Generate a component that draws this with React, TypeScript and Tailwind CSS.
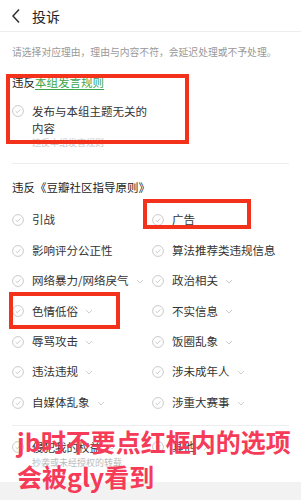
import React from "react";

const FONT = { fontFamily: '"Noto Sans CJK SC", "Noto Sans", sans-serif' };

function Check() {
  return (
    <svg width="12" height="12" viewBox="0 0 12 12" className="shrink-0">
      <circle cx="6" cy="6" r="5.4" fill="none" stroke="#c4c4c4" strokeWidth="0.9" />
      <path d="M3.6 6.1 L5.3 7.7 L8.5 4.4" fill="none" stroke="#c4c4c4" strokeWidth="0.9" />
    </svg>
  );
}

function Down() {
  return (
    <svg width="8" height="5" viewBox="0 0 8 5" className="shrink-0 ml-[7px] mt-[1px]">
      <path d="M1 1 L4 4 L7 1" fill="none" stroke="#c8c8c8" strokeWidth="0.9" />
    </svg>
  );
}

function Right() {
  return (
    <svg width="5" height="8" viewBox="0 0 5 8" className="shrink-0 ml-[8px]">
      <path d="M1 1 L4 4 L1 7" fill="none" stroke="#c8c8c8" strokeWidth="0.9" />
    </svg>
  );
}

function Item({ label, more }: { label: string; more?: boolean }) {
  return (
    <div className="flex items-center h-[30.4px]">
      <Check />
      <span className="ml-[8px] text-[11.5px] text-[#333] leading-none">{label}</span>
      {more && <Down />}
    </div>
  );
}

const left: [string, boolean][] = [
  ["引战", false],
  ["影响评分公正性", false],
  ["网络暴力/网络戾气", true],
  ["色情低俗", true],
  ["辱骂攻击", true],
  ["违法违规", true],
  ["自媒体乱象", true],
];
const right: [string, boolean][] = [
  ["广告", false],
  ["算法推荐类违规信息", false],
  ["政治相关", true],
  ["不实信息", true],
  ["饭圈乱象", true],
  ["涉未成年人", true],
  ["涉重大赛事", true],
];

export default function App() {
  return (
    <div className="relative w-[301px] h-[500px] overflow-hidden bg-white flex flex-col" style={FONT}>
      {/* header */}
      <div className="h-[32px] shrink-0 flex items-center border-b border-[#eeeeee]">
        <svg width="10" height="16" viewBox="0 0 10 16" className="ml-[11px]">
          <path d="M8 1.5 L2 8 L8 14.5" fill="none" stroke="#333" strokeWidth="1.5" />
        </svg>
        <span className="ml-[11px] text-[14px] text-[#222] leading-none">投诉</span>
      </div>
      {/* intro */}
      <div className="h-[40px] shrink-0 flex items-center px-3 text-[9.8px] text-[#999] whitespace-nowrap">
        请选择对应理由，理由与内容不符，会延迟处理或不予处理。
      </div>
      {/* group rules */}
      <div className="h-[22px] shrink-0 flex items-center px-3 text-[11.5px] text-[#222]">
        违反<span className="text-[#3ba64f] underline underline-offset-2">本组发言规则</span>
      </div>
      <div className="shrink-0 flex px-3 pt-[9px]">
        <div className="pt-[2px]"><Check /></div>
        <div className="ml-[8px]">
          <div className="text-[11.5px] leading-[17px] text-[#333]">
            <div>发布与本组主题无关的</div>
            <div>内容</div>
          </div>
          <div className="text-[9px] leading-[12px] text-[#c8c8c8]">违反本组发言规则</div>
        </div>
      </div>
      <div className="mx-3 mt-[14px] border-t border-[#eeeeee] shrink-0" />
      {/* guidelines */}
      <div className="shrink-0 px-3 pt-[14px] pb-[9px] text-[11.5px] leading-[18px] text-[#222]">
        违反《豆瓣社区指导原则》
      </div>
      <div className="shrink-0 grid grid-cols-[140px_1fr] pl-3">
        <div className="flex flex-col">
          {left.map(([l, m]) => (
            <Item key={l} label={l} more={m} />
          ))}
        </div>
        <div className="flex flex-col">
          {right.map(([l, m]) => (
            <Item key={l} label={l} more={m} />
          ))}
        </div>
      </div>
      <div className="mx-3 mt-[7px] border-t border-[#eeeeee] shrink-0" />
      <div className="h-[56px] shrink-0 grid grid-cols-[140px_1fr] pl-3 pt-[14px]">
        <div className="flex">
          <div className="pt-[1px]"><Check /></div>
          <div className="ml-[8px]">
            <div className="flex items-center text-[11.5px] leading-[14px] text-[#333]">
              侵犯我的权益<Down />
            </div>
            <div className="mt-[3px] text-[9px] leading-[12px] text-[#bbbbbb]">抄袭或未经授权的转载</div>
          </div>
        </div>
        <div className="flex items-start">
          <div className="pt-[1px]"><Check /></div>
          <div className="ml-[8px] flex items-center h-[14px] text-[11.5px] text-[#333]">
            其他<Right />
          </div>
        </div>
      </div>
      <div className="flex-1 bg-[#f2f2f2]" />

      {/* annotation boxes */}
      <div className="absolute left-[6px] top-[74px] w-[183px] h-[70px] border-4 border-[#f4321c]" />
      <div className="absolute left-[143px] top-[199px] w-[108px] h-[30px] border-4 border-[#f4321c]" />
      <div className="absolute left-[9px] top-[292px] w-[111px] h-[37px] border-4 border-[#f4321c]" />

      {/* annotation text */}
      <div className="absolute left-[17px] top-[424px] text-[25px] leading-[35px] font-semibold text-[#f53b57] whitespace-nowrap">
        <div>jb时不要点红框内的选项</div>
        <div>会被gly看到</div>
      </div>
    </div>
  );
}
